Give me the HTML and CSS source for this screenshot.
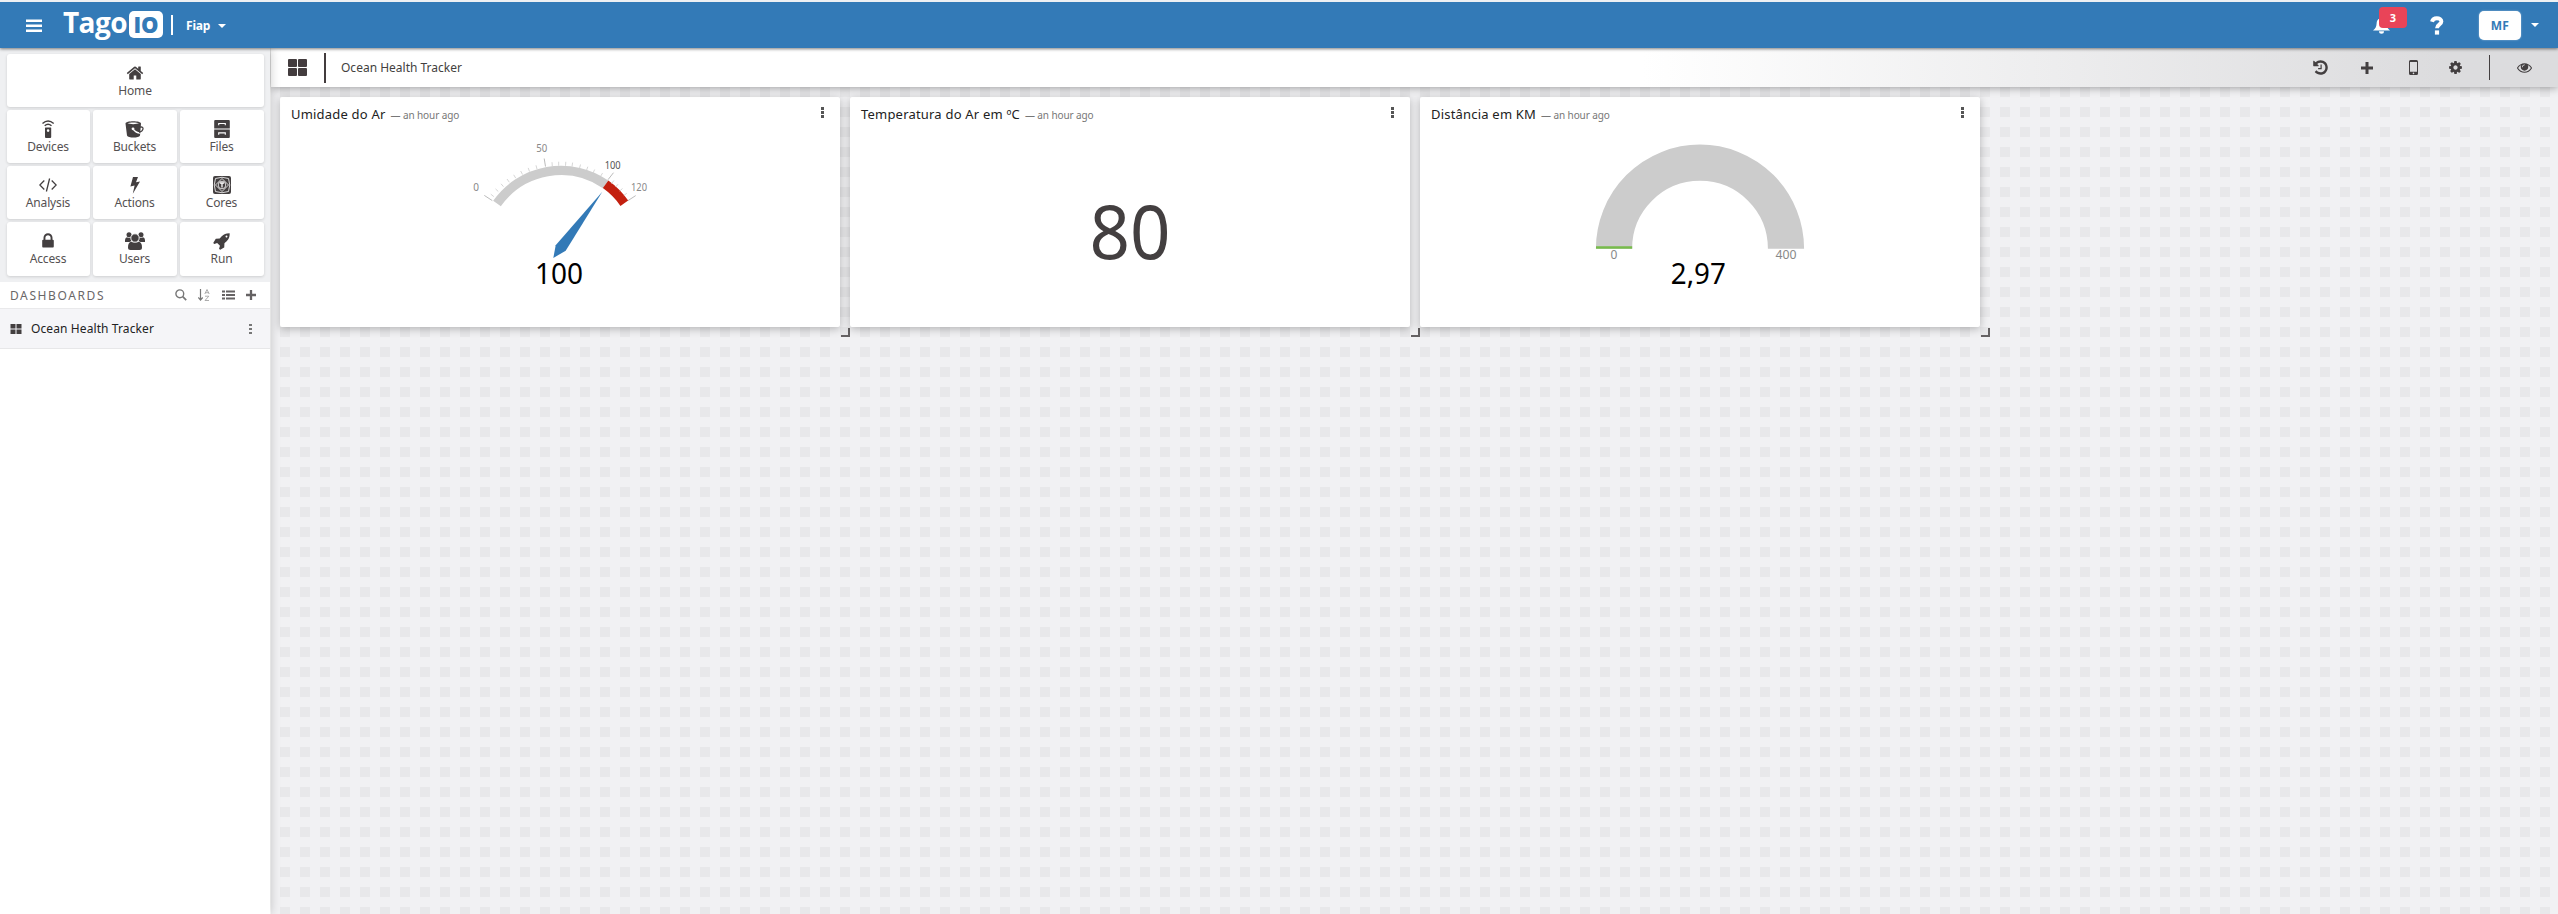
FILE: index.html
```
<!DOCTYPE html>
<html lang="pt">
<head>
<meta charset="utf-8">
<title>Ocean Health Tracker</title>
<link rel="stylesheet" href="styles.css">
</head>
<body>
<header class="topbar">
  <svg class="burger" width="16" height="14" viewBox="0 0 16 14"><path d="M0 .5h16v2.600H0zM0 5.500h16v2.600H0zM0 10.500h16v2.600H0z" fill="#fff"/></svg>
  <div class="logo"><span class="logo-word">Tago</span><span class="logo-io">IO</span></div>
  <div class="account"><span>Fiap</span><i class="caret"></i></div>
  <div class="top-right">
    <div class="bell">
      <svg width="17" height="17" viewBox="0 0 17 17"><path d="M8.500 0c-.8 0-1.200.5-1.200 1.200C4.500 2 3.700 4.200 3.600 6.500 3.500 9.500 2.500 11.500 0 13.500h17c-2.500-2-3.500-4-3.600-7C13.300 4.200 12.500 2 9.700 1.200 9.700.5 9.300 0 8.500 0zM6 14.300a2.500 2.500 0 0 0 5 0z" fill="#fff"/></svg>
      <span class="badge">3</span>
    </div>
    <svg class="question" width="14" height="19" viewBox="0 0 14 19"><path d="M2 5.700C2.600 3.400 4.300 2.200 6.800 2.200c2.600 0 4.600 1.300 4.600 3.300 0 2.900-4.400 2.900-4.400 6.700" fill="none" stroke="#fff" stroke-width="3.900"/><path d="M4.900 14.400h4.200v4.200H4.900z" fill="#fff"/></svg>
    <span class="avatar">MF</span>
    <i class="caret small"></i>
  </div>
</header>
<div class="body">
  <aside class="sidebar">
    <nav class="tiles">
      <a class="tile wide"><svg width="18" height="18" viewBox="0 0 1792 1792"><path d="M1472 992v480q0 26-19 45t-45 19h-384v-384h-256v384h-384q-26 0-45-19t-19-45v-480q0-1 .5-3t.5-3l575-474 575 474q1 2 1 6zm223-69l-62 74q-8 9-21 11h-3q-13 0-21-7l-692-577-692 577q-12 8-24 7-13-2-21-11l-62-74q-8-10-7-23.500t11-21.500l719-599q32-26 76-26t76 26l244 204v-195q0-14 9-23t23-9h192q14 0 23 9t9 23v408l219 182q10 8 11 21.500t-7 23.500z"/></svg><span>Home</span></a>
      <a class="tile"><svg width="18" height="18" viewBox="0 0 18 18"><path fill-rule="evenodd" d="M6.500 7.500h5.200a.5.500 0 0 1 .5.500v9a1 1 0 0 1-1 1H7a1 1 0 0 1-1-1V8a.5.500 0 0 1 .5-.5zM9.100 9.300a1.300 1.300 0 1 0 0 2.600 1.300 1.300 0 0 0 0-2.600z"/><path d="M3.500 3.500Q9-1.500 14.700 3.500M5.700 5.800Q9 2.700 12.500 5.800" fill="none" stroke="#433f40" stroke-width="1.400"/></svg><span>Devices</span></a>
      <a class="tile"><svg width="19" height="18" viewBox="0 0 19 18"><path fill-rule="evenodd" d="M.5 3.500C.5.500 16 .5 16 3.500L15 15.500C14 18.200 3 18.200 2 15.500zM2.500 3.300c2 1.100 9.500 1.100 11.500 0-2-1.200-9.500-1.200-11.500 0z"/><circle cx="8" cy="8.800" r="1.400" fill="#fff"/><path d="M8 9q3 4 7 4" fill="none" stroke="#fff" stroke-width="1.300"/><path d="M15 7.200q3.300-.8 3 1.800-.5 2.600-4 3.300" fill="none" stroke="#433f40" stroke-width="1.300"/></svg><span>Buckets</span></a>
      <a class="tile"><svg width="18" height="18" viewBox="0 0 18 18"><path d="M2.200 0h13.600q1 0 1 1v7.400H1.200V1q0-1 1-1zM1.200 9.400h15.600V17q0 1-1 1H2.200q-1 0-1-1z"/><path d="M5.700 5.300V3.500h6.600v1.800M5.700 14.700v-1.800h6.600v1.800" fill="none" stroke="#fff" stroke-width="1.100"/></svg><span>Files</span></a>
      <a class="tile"><svg width="18" height="18" viewBox="0 0 18 18"><path d="M5.300 4.500L.8 9l4.500 4.500M12.700 4.500L17.200 9l-4.500 4.500M10.600 2.500L7.400 15.500" fill="none" stroke="#433f40" stroke-width="1.300"/></svg><span>Analysis</span></a>
      <a class="tile"><svg width="18" height="18" viewBox="0 0 18 18"><path d="M7 1h5l-2 5.300 4-.8L6.800 17.800 8.600 9.600l-4.200 1z"/></svg><span>Actions</span></a>
      <a class="tile"><svg width="18" height="18" viewBox="0 0 18 18"><rect width="18" height="18" rx="2"/><g fill="none" stroke="#fff" stroke-width=".8"><circle cx="9" cy="9" r="3.800"/><path d="M2.500 2.500Q9 0 15.500 2.500 18 9 15.500 15.500 9 18 2.500 15.500 0 9 2.500 2.500zM2.500 9L9 2.500 15.500 9 9 15.500z"/></g><path d="M6.900 7h4.200M9 7v4.500" stroke="#fff" stroke-width="1.300"/></svg><span>Cores</span></a>
      <a class="tile"><svg width="18" height="18" viewBox="0 0 1792 1792"><path d="M640 768h512v-192q0-106-75-181t-181-75-181 75-75 181v192zm832 96v576q0 40-28 68t-68 28h-960q-40 0-68-28t-28-68v-576q0-40 28-68t68-28h32v-192q0-184 132-316t316-132 316 132 132 316v192h32q40 0 68 28t28 68z"/></svg><span>Access</span></a>
      <a class="tile"><svg width="20" height="18" viewBox="0 0 20 18"><circle cx="4" cy="2.800" r="2.500"/><circle cx="16" cy="2.800" r="2.500"/><path d="M0 10V8q.3-2.800 2-2.800 2 1 4 0L6.500 9l-2 1zM20 10V8q-.3-2.800-2-2.800-2 1-4 0L13.500 9l2 1z"/><circle cx="10" cy="6" r="4.200" stroke="#fff" stroke-width=".9"/><path d="M3 15.500q0-5.300 3.300-5.700 3.700 2 7.400 0 3.300.4 3.300 5.700 0 2.500-2.500 2.500h-9Q3 18 3 15.500z"/></svg><span>Users</span></a>
      <a class="tile"><svg width="18" height="18" viewBox="0 0 1792 1792"><path d="M1440 448q0-40-28-68t-68-28-68 28-28 68 28 68 68 28 68-28 28-68zm224-288q0 249-75.500 430.500t-253.500 360.500q-81 80-195 176l-20 379q-2 16-16 26l-384 224q-7 4-16 4-12 0-23-9l-64-64q-13-14-8-32l85-276-281-281-276 85q-3 1-9 1-14 0-23-9l-64-64q-17-19-5-39l224-384q10-14 26-16l379-20q96-114 176-195 188-187 358-258t431-71q14 0 24 9.500t10 22.500z"/></svg><span>Run</span></a>
    </nav>
    <div class="dash-head">
      <span class="dash-title">DASHBOARDS</span>
      <div class="dash-tools">
        <svg width="12" height="12" viewBox="0 0 12 12"><circle cx="4.800" cy="4.800" r="3.900" fill="none" stroke="#777" stroke-width="1.400"/><path d="M7.700 7.700l3.500 3.500" stroke="#777" stroke-width="1.700"/></svg>
        <svg width="12" height="12" viewBox="0 0 12 12"><path d="M2.500 0v10.500M.3 8.500l2.200 2.500 2.200-2.500" fill="none" stroke="#777" stroke-width="1.200"/><path d="M6.800 5L9 .5 11.200 5M7.500 3.700h3M7 7.200h3.800L7 11.500h4" fill="none" stroke="#999" stroke-width=".8"/></svg>
        <svg width="13" height="10" viewBox="0 0 13 10"><path d="M0 .5h3v2H0zM4 .5h9v2H4zM0 4h3v2H0zM4 4h9v2H4zM0 7.500h3v2H0zM4 7.500h9v2H4z" fill="#656263"/></svg>
        <svg width="10" height="10" viewBox="0 0 10 10"><path d="M5 0v10M0 5h10" stroke="#656263" stroke-width="2.300"/></svg>
      </div>
    </div>
    <div class="dash-item">
      <svg width="12" height="10" viewBox="0 0 12 10"><path d="M.5 0h5v4.500h-5zM6.500 0h5v4.500h-5zM.5 5.500h5V10h-5zM6.500 5.500h5V10h-5z" fill="#433f40"/></svg>
      <span>Ocean Health Tracker</span>
      <i class="dots light"></i>
    </div>
  </aside>
  <main class="main">
    <div class="toolbar">
      <svg class="grid-icon" width="19" height="17" viewBox="0 0 19 17"><g fill="#433c3e"><rect width="9" height="8" rx="1"/><rect x="10" width="9" height="8" rx="1"/><rect y="9" width="9" height="8" rx="1"/><rect x="10" y="9" width="9" height="8" rx="1"/></g></svg>
      <i class="bar"></i>
      <span class="title">Ocean Health Tracker</span>
      <div class="actions">
        <svg class="a1" width="17" height="17" viewBox="0 0 1792 1792"><path d="M1664 896q0 156-61 298t-164 245-245 164-298 61q-172 0-327-72.500t-264-204.500q-7-10-6.500-22.500t8.500-20.500l137-138q10-9 25-9 16 2 23 12 73 95 179 147t225 52q104 0 198.500-40.500t163.500-109.500 109.500-163.500 40.500-198.500-40.500-198.500-109.500-163.500-163.500-109.500-198.500-40.500q-98 0-188 35.500t-160 101.500l137 138q31 30 14 69-17 40-59 40h-448q-26 0-45-19t-19-45v-448q0-42 40-59 39-17 69 14l130 129q107-101 244.500-156.500t284.500-55.500q156 0 298 61t245 164 164 245 61 298zm-640-288v448q0 14-9 23t-23 9h-320q-14 0-23-9t-9-23v-64q0-14 9-23t23-9h224v-352q0-14 9-23t23-9h64q14 0 23 9t9 23z"/></svg>
        <svg class="a2" width="12" height="12" viewBox="0 0 12 12"><path d="M6 0v12M0 6h12" stroke="#433f40" stroke-width="3"/></svg>
        <svg class="a3" width="9" height="15" viewBox="0 0 9 15"><path fill-rule="evenodd" d="M1.500 0h6Q9 0 9 1.500v12Q9 15 7.500 15h-6Q0 15 0 13.500v-12Q0 0 1.500 0zM1 2v9.800h7V2zM4.500 12.600a.8.800 0 1 0 0 1.600.8.800 0 0 0 0-1.600z"/></svg>
        <svg class="a4" width="15" height="15" viewBox="0 0 1792 1792"><path d="M1152 896q0-106-75-181t-181-75-181 75-75 181 75 181 181 75 181-75 75-181zm512-109v222q0 12-8 23t-20 13l-185 28q-19 54-39 91 35 50 107 138 10 12 10 25t-9 23q-27 37-99 108t-94 71q-12 0-26-9l-138-108q-44 23-91 38-16 136-29 186-7 28-36 28h-222q-14 0-24.500-8.500t-11.500-21.500l-28-184q-49-16-90-37l-141 107q-10 9-25 9-14 0-25-11-126-114-165-168-7-10-7-23 0-12 8-23 15-21 51-66.500t54-70.500q-27-50-41-99l-183-27q-13-2-21-12.500t-8-23.500v-222q0-12 8-23t19-13l186-28q14-46 39-92-40-57-107-138-10-12-10-24 0-10 9-23 26-36 98.500-107.500t94.500-71.500q13 0 26 10l138 107q44-23 91-38 16-136 29-186 7-28 36-28h222q14 0 24.500 8.500t11.500 21.500l28 184q49 16 90 37l142-107q9-9 24-9 13 0 25 10 129 119 165 170 7 8 7 22 0 12-8 23-15 21-51 66.500t-54 70.500q26 50 41 98l183 28q13 2 21 12.500t8 23.500z"/></svg>
        <i class="divider"></i>
        <svg class="a5" width="15" height="15" viewBox="0 0 1792 1792"><path d="M1664 960q-152-236-381-353 61 104 61 225 0 185-131.500 316.500t-316.500 131.500-316.500-131.500-131.500-316.500q0-121 61-225-229 117-381 353 133 205 333.500 326.500t434.500 121.500 434.500-121.500 333.500-326.500zm-720-384q0-20-14-34t-34-14q-125 0-214.500 89.500t-89.500 214.500q0 20 14 34t34 14 34-14 14-34q0-86 61-147t147-61q20 0 34-14t14-34zm848 384q0 34-20 69-140 230-376.500 368.500t-499.500 138.500-499.500-139-376.500-368q-20-35-20-69t20-69q140-229 376.500-368t499.500-139 499.500 139 376.500 368q20 35 20 69z"/></svg>
      </div>
    </div>
    <div class="canvas">
      <section class="card">
        <h2><span class="name">Umidade do Ar</span><small>— an hour ago</small></h2><i class="dots"></i>
        <svg class="chart" width="560" height="200" viewBox="280 127 560 200">
          <path d="M497 203.500A78.500 78.500 0 0 1 605.600 184.300" fill="none" stroke="#ccc" stroke-width="9.400"/>
          <path d="M605.600 184.300A78.500 78.500 0 0 1 624.300 203.200" fill="none" stroke="#c3200f" stroke-width="9.400"/>
          <g stroke="#ccc" stroke-width=".8"><path d="M493.800 196.600l-3-2.400M498.300 191.500l-2.800-2.600M503.500 186.700l-2.500-2.900M509.300 182.200l-2.300-3.200M515.700 178.100l-2-3.300M522.500 174.500l-1.800-3.500M529.500 171.500l-1.300-3.600M537 169.100l-1-3.800M552.300 166.200l-.3-4M558.700 165.700v-4M565.500 165.800l.3-4M572 166.600l.6-4M579.500 168.300l1-3.800M586.500 170.400l1.300-3.700M593 173l1.700-3.500M600.500 176.500l2-3.400M611.500 183.500l2.400-3M615.500 187l2.600-2.800M619.700 191l2.800-2.500M623.800 195.600l3-2.400"/><path d="M492.300 200.600l-8-5.200M545.500 166.500l-1.300-8M608 179.700l5.500-7M628 200.600l7.700-5" stroke="#aaa"/></g>
          <path d="M602.300 191.700L565.700 250.700 553.300 258 555.700 245.300z" fill="#337ab7"/>
          <g class="lbl"><text x="476" y="191">0</text><text x="541.700" y="152" textLength="11" lengthAdjust="spacingAndGlyphs">50</text><text class="strong" x="612.700" y="169" textLength="16" lengthAdjust="spacingAndGlyphs">100</text><text x="639" y="191" textLength="16" lengthAdjust="spacingAndGlyphs">120</text></g>
          <text class="val" x="559" y="283.500" textLength="48" lengthAdjust="spacingAndGlyphs">100</text>
        </svg>
      </section>
      <section class="card">
        <h2><span class="name">Temperatura do Ar em ºC</span><small>— an hour ago</small></h2><i class="dots"></i>
        <svg class="chart" width="560" height="200" viewBox="850 127 560 200"><text class="big" x="1130" y="259" textLength="81" lengthAdjust="spacingAndGlyphs">80</text></svg>
      </section>
      <section class="card">
        <h2><span class="name">Distância em KM</span><small>— an hour ago</small></h2><i class="dots"></i>
        <svg class="chart" width="560" height="200" viewBox="1420 127 560 200">
          <path d="M1614 248.700a86 86 0 0 1 172 0" fill="none" stroke="#ccc" stroke-width="36.200"/>
          <path d="M1596 246.300h36.200v2.400H1596z" fill="#77bb4b"/>
          <g class="lbl mid"><text x="1614" y="259">0</text><text x="1786" y="259" textLength="21" lengthAdjust="spacingAndGlyphs">400</text></g>
          <text class="val" x="1698.300" y="283.500" textLength="55" lengthAdjust="spacingAndGlyphs">2,97</text>
        </svg>
      </section>
    </div>
  </main>
</div>
</body>
</html>
```
FILE: styles.css
```
* { box-sizing: border-box; }
html, body { height: 100%; overflow: hidden; }
body { margin: 0; display: flex; flex-direction: column; font-family: "Noto Sans", "Open Sans", sans-serif; color: #433f40; border-top: 2px solid #edf0f3; }
svg { display: block; flex: none; fill: #433f40; }

.topbar { position: relative; z-index: 5; height: 46px; flex: none; display: flex; align-items: center; padding-left: 26px; background: #337ab7; box-shadow: 0 1px 3px rgba(0,0,0,.5); color: #fff; }
.burger { margin-top: 1px; }
.logo { display: flex; align-items: center; margin-left: 21px; padding-right: 8px; border-right: 2px solid #fff; height: 20px; margin-top: 0; }
.logo-word { width: 64px; font: 700 28px/26px "Open Sans", sans-serif; letter-spacing: -.6px; margin-top: -6px; }
.logo-io { width: 34px; height: 27px; margin: -1px 0 0 2px; border-radius: 5px; background: #fff; color: #337ab7; font: 800 22px/27px "Open Sans", sans-serif; text-align: center; }
.account { display: flex; align-items: center; gap: 8px; margin: 1px 0 0 13px; font-size: 12px; font-weight: 700; }
.account span { width: 24px; letter-spacing: -.2px; }
.caret { border: 4px solid transparent; border-top-color: #fff; border-bottom: 0; }
.caret.small { margin-left: 10px; }
.top-right { margin-left: auto; display: flex; align-items: center; padding-right: 19px; }
.bell { position: relative; margin-right: 40px; }
.badge { position: absolute; left: 6px; top: -10px; width: 28px; height: 21px; border-radius: 4px; background: #e94458; font: 700 11px/21px "Noto Sans", sans-serif; text-align: center; }
.question { margin: 1px 35px 0 0; }
.avatar { width: 42px; height: 29px; border-radius: 5px; background: #fff; color: #337ab7; font-size: 12px; font-weight: 700; line-height: 29px; text-align: center; box-shadow: 0 0 2px rgba(255,255,255,.5); letter-spacing: .4px; }

.body { flex: 1; display: flex; min-height: 0; }
.sidebar { position: relative; z-index: 3; width: 270px; margin-right: 1px; flex: none; background: #fff; box-shadow: 0 0 10px rgba(0,0,0,.22); }
.tiles { display: grid; grid-template-columns: 83px 84px 84px; grid-template-rows: 53px 53px 53px 54px; gap: 3px; padding: 6px 0 6px 7px; background: #eff0f2; }
.tile { display: flex; flex-direction: column; align-items: center; padding: 10px 1px 0 0; background: #fff; border-radius: 3px; box-shadow: 0 1px 3px rgba(0,0,0,.14); font-size: 12px; line-height: 16px; }
.tile span { margin-top: 1px; letter-spacing: -.15px; color: #555152; }
.wide { grid-column: 1 / -1; }
.dash-head { display: flex; align-items: center; justify-content: space-between; height: 27px; padding: 0 14px 0 10px; border-bottom: 1px solid #e9e9eb; }
.dash-title { margin-top: 2px; font-size: 12px; line-height: 16px; letter-spacing: 1.600px; color: #6a6768; }
.dash-tools { display: flex; align-items: center; gap: 11.300px; }
.dash-item { display: flex; align-items: center; height: 40px; padding: 0 18px 0 10px; background: #f5f5f8; border-bottom: 1px solid #e7e7e9; font-size: 12px; color: #222; }
.dash-item span { margin: 0 auto 0 9px; letter-spacing: .1px; }

.dots { width: 3px; height: 11px; background: repeating-linear-gradient(#555 0 3px, transparent 3px 4px); }
.dots.light { height: 10px; background: repeating-linear-gradient(#777 0 2px, transparent 2px 4px); }

.main { flex: 1; min-width: 0; display: flex; flex-direction: column; }
.toolbar { position: relative; z-index: 2; height: 39px; flex: none; display: flex; align-items: center; padding-left: 17px; background: linear-gradient(90deg, #fff 0 60%, #dcdcde 95%); box-shadow: 0 1px 8px rgba(0,0,0,.35); }
.bar { width: 2px; height: 30px; margin: 0 15px 0 17px; background: #433c3e; }
.title { font-size: 12px; letter-spacing: 0; }
.actions { display: flex; align-items: center; margin-left: auto; padding-right: 26px; }
.a1 { margin-right: 32px; }
.a2 { margin-right: 36px; }
.a3 { margin-right: 30px; }
.a4 { margin-right: 26px; }
.divider { width: 1px; height: 25px; margin: -1px 27px 0 0; background: #433f40; }

.canvas { flex: 1; display: flex; align-items: flex-start; gap: 10px; padding: 10px 9px; background: conic-gradient(#f1f1f3 75%, #e8e8ea 0) 9px 0 / 20px 20px; }
.card { position: relative; width: 560px; height: 230px; background: #fff; border-radius: 2px; box-shadow: 0 2px 9px rgba(0,0,0,.26); }
.card::after { content: ""; position: absolute; right: -10px; bottom: -10px; width: 7px; height: 7px; border: solid #656263; border-width: 0 2px 2px 0; }
.card h2 { display: flex; align-items: baseline; height: 30px; margin: 0; padding: 8px 0 0 11px; font-size: 13px; line-height: 18px; font-weight: 400; color: #222; letter-spacing: .2px; }
.card small { margin-left: 5px; font-size: 10px; color: #777; letter-spacing: -.1px; }
.card > .dots { position: absolute; right: 16px; top: 10px; }
.chart text { text-anchor: middle; fill: #000; font-family: "Noto Sans", sans-serif; }
.chart .lbl text { font-size: 10px; fill: #888; }
.chart .lbl .strong { fill: #555; }
.chart .mid text { font-size: 12px; }
.chart .val { font-size: 29px; }
.chart .big { font-size: 75px; fill: #433f40; }
```
